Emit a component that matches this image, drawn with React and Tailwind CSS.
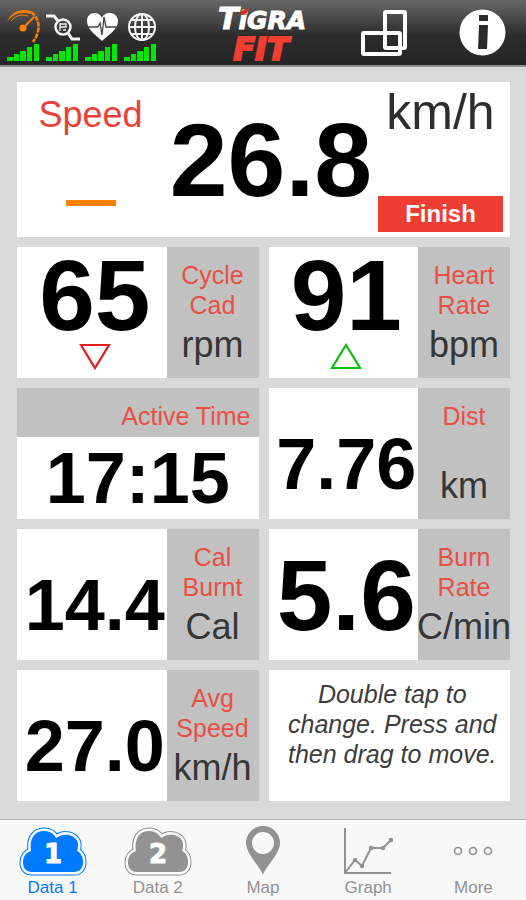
import React, { useState } from 'react';

const CLOUD_PATH =
  'M13 46C7 46 4 42 4 36.500C4 30 7 27 12 25C10 12 16 5 25 5C31 5 35 8 37 12C41 9 46 8 50 9C58 11 61 17 58 25C62 27 64 31 64 36C64 42 61 46 55 46Z';

const SignalBars = () => (
  <svg width="34" height="18" viewBox="0 0 34 18" fill="#00e800" aria-hidden="true">
    <rect x="0" y="14" width="6" height="4" />
    <rect x="7" y="11" width="5" height="7" />
    <rect x="13" y="8" width="6" height="10" />
    <rect x="20" y="4" width="5" height="14" />
    <rect x="27" y="1" width="5" height="17" />
  </svg>
);

const GaugeIcon = () => (
  <svg width="34" height="33" viewBox="0 0 34 33" fill="none" aria-hidden="true">
    <path d="M0 12C4 2 14 -2 24 1L23 4C14 1 6 4 0 12Z" fill="#ff8000" />
    <path d="M4 11C9 5 15 4 21 6" stroke="#ff8000" strokeWidth="1" />
    <path d="M24 2C30 6 33 14 31 21C30 26 28 29 26 32" stroke="#ff8000" strokeWidth="2.500" strokeDasharray="5 1" />
    <path d="M16 18L27 7" stroke="#ff8000" strokeWidth="2" />
    <circle cx="16" cy="18" r="3.500" fill="#ff8000" />
  </svg>
);

const CrankIcon = () => (
  <svg width="34" height="33" viewBox="0 0 34 33" fill="none" stroke="#f4f4f4" aria-hidden="true">
    <path d="M0 6H8L12 11M22 23L26 29H34" strokeWidth="3" />
    <circle cx="17" cy="17" r="7.500" strokeWidth="2.500" />
    <path d="M14 21V14H20V17H14M17 20H20" strokeWidth="1.300" />
  </svg>
);

const HeartIcon = () => (
  <svg width="34" height="33" viewBox="0 0 34 33" fill="none" aria-hidden="true">
    <path
      d="M17 31C12 26 2 20 2 11C2 6 5 3 10 3C13 3 16 5 17 8C18 5 21 3 25 3C30 3 33 7 33 11C33 20 22 26 17 31Z"
      fill="#fff"
    />
    <path d="M2 17H13L15 13L17 25L19 7L21 17H32" stroke="#444" strokeWidth="1.300" />
  </svg>
);

const GlobeIcon = () => (
  <svg width="34" height="33" viewBox="0 0 34 33" fill="none" stroke="#f4f4f4" strokeWidth="2" aria-hidden="true">
    <circle cx="18" cy="17" r="13" />
    <ellipse cx="18" cy="17" rx="7" ry="13" />
    <path d="M18 4V30M5 17H31M7 10H29M7 24H29" />
  </svg>
);

const Logo = () => (
  <svg
    width="96"
    height="65"
    viewBox="0 0 96 65"
    role="img"
    aria-label="Tigra Fit"
    className="overflow-visible font-['DejaVu_Sans',sans-serif] font-bold italic"
  >
    <text x="3" y="29" fill="#fff" stroke="#fff" strokeWidth="1">
      <tspan className="text-[30px]">T</tspan>
      <tspan className="text-[25px]">iGRA</tspan>
    </text>
    <path d="M25 14C27 10 30 9 34 8L32 13L28 15Z" fill="#e0261c" />
    <text
      x="46"
      y="60"
      textAnchor="middle"
      fill="#f03e32"
      stroke="#f03e32"
      strokeWidth="2"
      className="text-[32px]"
    >
      FIT
    </text>
  </svg>
);

const RotateIcon = () => (
  <svg width="46" height="46" viewBox="0 0 46 46" fill="none" stroke="#fff" aria-hidden="true">
    <rect x="24" y="2" width="20" height="36" rx="1" strokeWidth="4" />
    <rect x="2" y="23" width="37" height="21" rx="1" strokeWidth="4" />
  </svg>
);

const InfoIcon = () => (
  <svg width="47" height="47" viewBox="0 0 47 47" aria-hidden="true">
    <circle cx="23.500" cy="23.500" r="23" fill="#fff" />
    <path d="M20 6H29V12H20ZM20 16H29L28 40H19Z" fill="#2a2a2a" />
  </svg>
);

const CloudIcon = ({ number }) => (
  <svg width="68" height="50" viewBox="0 0 68 50" aria-hidden="true">
    <path d={CLOUD_PATH} fill="currentColor" stroke="currentColor" strokeWidth="7" />
    <path d={CLOUD_PATH} fill="none" stroke="#f8f8f8" strokeWidth="5" />
    <path d={CLOUD_PATH} fill="currentColor" />
    <text
      x="34"
      y="37"
      textAnchor="middle"
      fill="#fff"
      stroke="#fff"
      strokeWidth="1"
      className="font-['DejaVu_Sans',sans-serif] text-[26px] font-bold"
    >
      {number}
    </text>
  </svg>
);

const PinIcon = () => (
  <svg width="36" height="50" viewBox="0 0 36 50" aria-hidden="true">
    <path
      fillRule="evenodd"
      fill="currentColor"
      d="M18 49C15 40 1 28 1 17A17 17 0 0 1 35 17C35 28 21 40 18 49ZM18 6A11 11 0 1 0 18 28A11 11 0 1 0 18 6Z"
    />
  </svg>
);

const GraphIcon = () => (
  <svg width="50" height="50" viewBox="0 0 50 50" fill="none" stroke="currentColor" strokeWidth="2" aria-hidden="true">
    <path d="M2 2V47H48" />
    <path d="M2 47L12 34L19 40L28 22H40L48 14" />
    <g fill="currentColor" stroke="none">
      <circle cx="12" cy="34" r="2.200" />
      <circle cx="19" cy="40" r="2.200" />
      <circle cx="28" cy="22" r="2.200" />
      <circle cx="40" cy="22" r="2.200" />
      <circle cx="48" cy="14" r="2.200" />
    </g>
  </svg>
);

const MoreIcon = () => (
  <svg width="40" height="50" viewBox="0 0 40 50" fill="none" stroke="currentColor" strokeWidth="1.700" aria-hidden="true">
    <circle cx="5" cy="25" r="3.500" />
    <circle cx="20" cy="25" r="3.500" />
    <circle cx="35" cy="25" r="3.500" />
  </svg>
);

const TrendIcon = ({ trend }) =>
  trend === 'down' ? (
    <svg width="32" height="27" viewBox="0 0 32 27" fill="none" stroke="#e01b22" strokeWidth="2.200" aria-label="Falling">
      <path d="M2 2H30L16 25Z" />
    </svg>
  ) : (
    <svg width="32" height="27" viewBox="0 0 32 27" fill="none" stroke="#0abf0f" strokeWidth="2.200" aria-label="Rising">
      <path d="M2 25H30L16 2Z" />
    </svg>
  );

const SENSORS = [
  { id: 'speed', Icon: GaugeIcon },
  { id: 'cadence', Icon: CrankIcon },
  { id: 'heart', Icon: HeartIcon },
  { id: 'network', Icon: GlobeIcon },
];

const TABS = [
  { id: 'data1', label: 'Data 1', icon: <CloudIcon number="1" /> },
  { id: 'data2', label: 'Data 2', icon: <CloudIcon number="2" /> },
  { id: 'map', label: 'Map', icon: <PinIcon /> },
  { id: 'graph', label: 'Graph', icon: <GraphIcon /> },
  { id: 'more', label: 'More', icon: <MoreIcon /> },
];

const Header = () => (
  <header className="grid grid-cols-[1fr_auto_1fr] items-center h-[67px] border-b-2 border-[#8f8f8f] bg-linear-to-b from-[#686868] via-[#2c2c2c] via-55% to-[#252525]">
    <div className="flex gap-[5px] pt-[5px] pl-[7px]">
      {SENSORS.map(({ id, Icon }) => (
        <div key={id} className="flex flex-col">
          <Icon />
          <SignalBars />
        </div>
      ))}
    </div>
    <h1>
      <Logo />
    </h1>
    <div className="flex items-center justify-end gap-[52px] pr-5">
      <button type="button" aria-label="Rotate screen">
        <RotateIcon />
      </button>
      <button type="button" aria-label="Information">
        <InfoIcon />
      </button>
    </div>
  </header>
);

const SpeedCard = () => (
  <section className="flex h-[155px] bg-white">
    <div className="flex w-[147px] flex-col items-center justify-between pt-[13px] pb-[31px]">
      <h2 className="text-[36px] leading-[40px] text-[#ea4136]">Speed</h2>
      <div className="h-[6px] w-[50px] bg-[#ff8000]"></div>
    </div>
    <div className="flex flex-1 items-center justify-center text-[104px] leading-none font-bold">26.8</div>
    <div className="flex w-[132px] flex-col justify-between pt-[2px] pr-[7px] pb-[5px]">
      <span className="text-center text-[50px] leading-[56px] text-[#2e2e2e]">km/h</span>
      <button type="button" className="h-[36px] bg-[#ee3e34] text-[24px] font-bold text-white">
        Finish
      </button>
    </div>
  </section>
);

const DataTile = ({ value, label, unit, large, trend }) => (
  <section className="flex bg-white">
    <div className="flex min-w-0 flex-1 flex-col items-center justify-center pl-[6px] font-bold">
      {large ? (
        <span className="text-[100px] leading-[96px]">{value}</span>
      ) : (
        <span className="pt-5 text-[72px] leading-[72px]">{value}</span>
      )}
      {trend && (
        <span className="flex h-[35px]">
          <TrendIcon trend={trend} />
        </span>
      )}
    </div>
    <div className="flex w-[92px] flex-col items-center justify-between bg-[#c1c1c1] py-[13px]">
      <h2 className="px-1 text-center text-[25px] leading-[30px] text-[#e94f44]">{label}</h2>
      <span className="text-[36px] leading-[40px] whitespace-nowrap text-[#363636]">{unit}</span>
    </div>
  </section>
);

const TimeTile = () => (
  <section className="flex flex-col bg-white">
    <h2 className="h-[49px] bg-[#c1c1c1] pt-[13px] pr-2 text-right text-[25px] leading-[30px] text-[#e94f44]">
      Active Time
    </h2>
    <div className="flex flex-1 items-center justify-center text-[72px] leading-[72px] font-bold">17:15</div>
  </section>
);

const App = () => {
  const [activeTab, setActiveTab] = useState('data1');

  return (
    <div className="flex min-h-screen flex-col bg-[#d9d9d9] font-['Liberation_Sans',Arial,sans-serif] text-black">
      <Header />

      <main className="flex flex-1 flex-col gap-[10px] pt-[15px] pr-4 pb-[18px] pl-[17px]">
        <SpeedCard />
        <div className="grid flex-1 auto-rows-fr grid-cols-2 gap-[10px]">
          <DataTile value="65" label="Cycle Cad" unit="rpm" trend="down" large />
          <DataTile value="91" label="Heart Rate" unit="bpm" trend="up" large />
          <TimeTile />
          <DataTile value="7.76" label="Dist" unit="km" />
          <DataTile value="14.4" label="Cal Burnt" unit="Cal" />
          <DataTile value="5.6" label="Burn Rate" unit="C/min" large />
          <DataTile value="27.0" label="Avg Speed" unit="km/h" />
          <p className="bg-white pt-[9px] pl-[6px] text-center text-[25px] leading-[30px] text-[#3c3c3c] italic">
            Double tap to change. Press and then drag to move.
          </p>
        </div>
      </main>

      <nav className="grid grid-cols-5 border-t border-[#b4b4b4] bg-[#f8f8f8] pt-[6px] pb-[2px]">
        {TABS.map(tab => (
          <button
            key={tab.id}
            type="button"
            onClick={() => setActiveTab(tab.id)}
            className={`flex flex-col items-center gap-[2px] ${activeTab === tab.id ? 'text-[#007aff]' : 'text-[#929292]'}`}
          >
            {tab.icon}
            <span className="text-[17px] leading-[20px]">{tab.label}</span>
          </button>
        ))}
      </nav>
    </div>
  );
};

export default App;
